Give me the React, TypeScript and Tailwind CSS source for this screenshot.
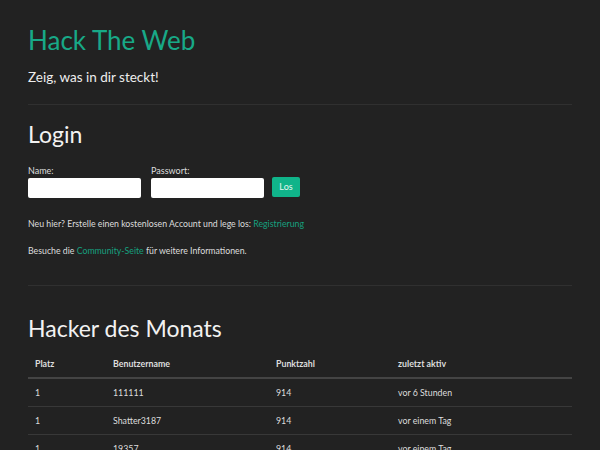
import React from "react";

const rows = [
  { platz: "1", name: "111111", punkte: "914", aktiv: "vor 6 Stunden" },
  { platz: "1", name: "Shatter3187", punkte: "914", aktiv: "vor einem Tag" },
  { platz: "1", name: "19357", punkte: "914", aktiv: "vor einem Tag" },
];

const cols = "grid grid-cols-[85px_163px_122px_1fr]";

const App = () => {
  return (
    <div className="min-h-screen bg-[#222222] text-[#eeeeee] font-['Lato',sans-serif] px-[28px] pt-[24px] overflow-hidden">
      <h1 className="text-[26px] leading-[32px] text-[#18a987] h-[32px]">Hack The Web</h1>
      <p className="mt-[11px] text-[13.5px] leading-[20px] text-[#eeeeee]">Zeig, was in dir steckt!</p>
      <hr className="mt-[17px] border-t border-[#303030]" />

      <h2 className="mt-[14px] text-[23px] leading-[30px] text-[#f2f2f2]">Login</h2>
      <form className="mt-[16px] flex items-end gap-[10px]" onSubmit={(e) => e.preventDefault()}>
        <label className="flex flex-col">
          <span className="text-[9px] leading-[12px] text-[#dddddd]">Name:</span>
          <input className="mt-[1px] w-[113px] h-[20px] bg-white rounded-[2px] outline-none" />
        </label>
        <label className="flex flex-col">
          <span className="text-[9px] leading-[12px] text-[#dddddd]">Passwort:</span>
          <input type="password" className="mt-[1px] w-[113px] h-[20px] bg-white rounded-[2px] outline-none" />
        </label>
        <button className="-ml-[2px] mb-[1px] w-[28px] h-[20px] bg-[#10b48a] rounded-[2px] text-[9px] text-[#e6f7f1]">
          Los
        </button>
      </form>

      <p className="mt-[19px] text-[8.75px] leading-[14px] text-[#dddddd]">
        Neu hier? Erstelle einen kostenlosen Account und lege los:{" "}
        <a className="text-[#16a07f]">Registrierung</a>
      </p>
      <p className="mt-[13px] text-[8.75px] leading-[14px] text-[#dddddd]">
        Besuche die <a className="text-[#16a07f]">Community-Seite</a> für weitere Informationen.
      </p>
      <hr className="mt-[27px] border-t border-[#303030]" />

      <h2 className="mt-[27px] text-[23px] leading-[30px] text-[#f2f2f2]">Hacker des Monats</h2>
      <div className="mt-[8px] text-[8.8px]">
        <div className={`${cols} h-[28px] items-center font-bold border-b-2 border-[#444444] text-[#dddddd]`}>
          <div className="pl-[7px]">Platz</div>
          <div>Benutzername</div>
          <div>Punktzahl</div>
          <div>zuletzt aktiv</div>
        </div>
        {rows.map((r, i) => (
          <div key={i} className={`${cols} h-[28px] items-center border-b border-[#383838] text-[#dddddd]`}>
            <div className="pl-[7px]">{r.platz}</div>
            <div>{r.name}</div>
            <div>{r.punkte}</div>
            <div>{r.aktiv}</div>
          </div>
        ))}
      </div>
    </div>
  );
};

export default App;
